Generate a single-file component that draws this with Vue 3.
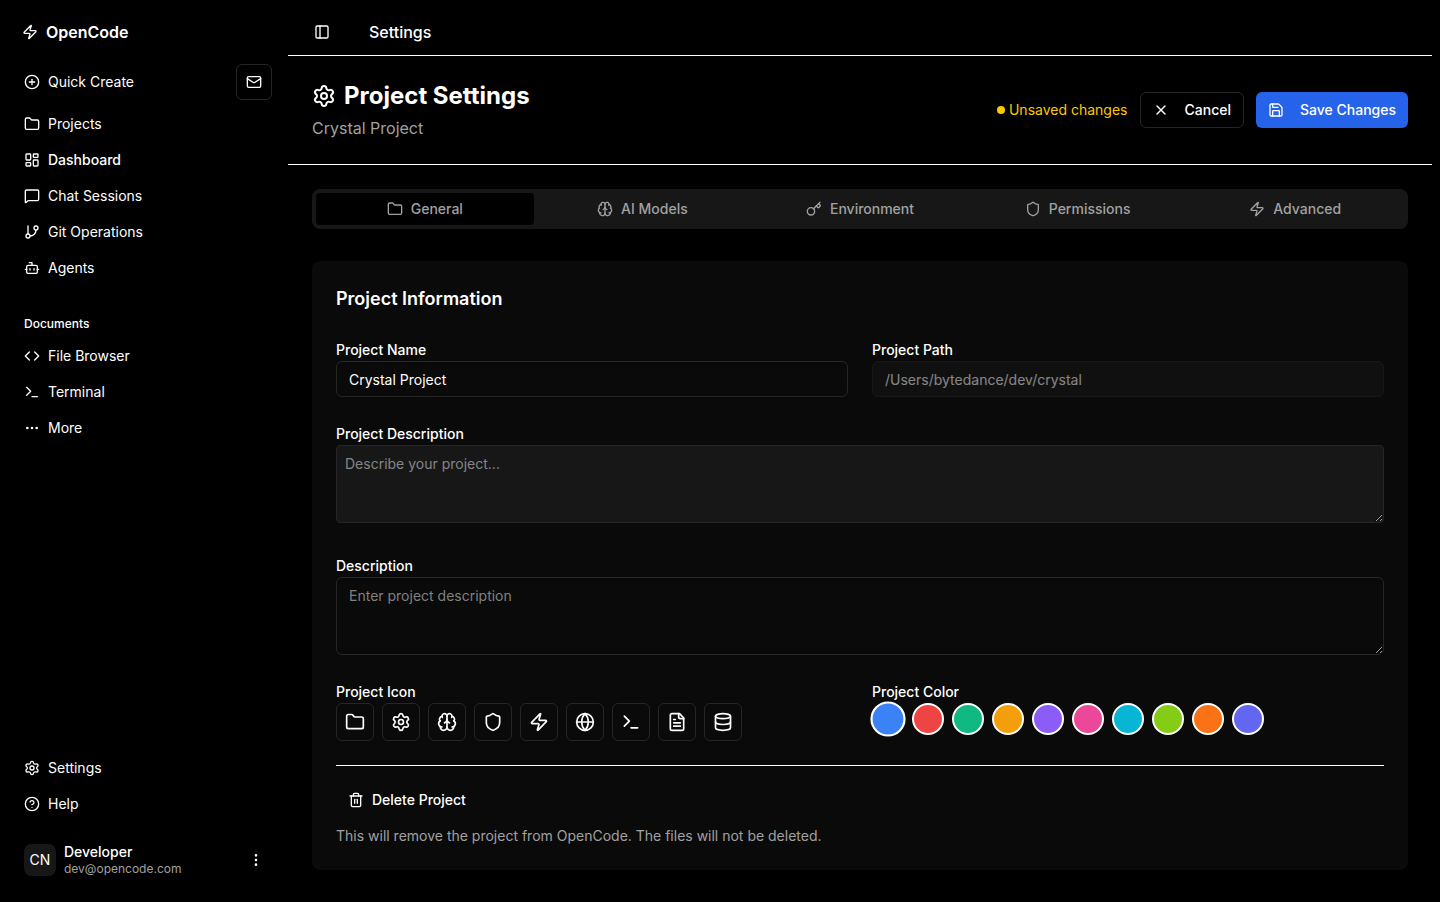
<script setup>
import { h, ref } from 'vue'

const icons = {
  zap: ['M4 14a1 1 0 0 1-.78-1.63l9.9-10.2a.5.5 0 0 1 .86.46l-1.92 6.02A1 1 0 0 0 13 10h7a1 1 0 0 1 .78 1.63l-9.9 10.2a.5.5 0 0 1-.86-.46l1.92-6.02A1 1 0 0 0 11 14z'],
  plus: ['M2 12a10 10 0 1 0 20 0a10 10 0 1 0-20 0', 'M8 12h8', 'M12 8v8'],
  mail: ['m22 7-8.991 5.727a2 2 0 0 1-2.009 0L2 7', 'M4 4h16a2 2 0 0 1 2 2v12a2 2 0 0 1-2 2H4a2 2 0 0 1-2-2V6a2 2 0 0 1 2-2z'],
  folder: ['M20 20a2 2 0 0 0 2-2V8a2 2 0 0 0-2-2h-7.9a2 2 0 0 1-1.69-.9L9.6 3.9A2 2 0 0 0 7.93 3H4a2 2 0 0 0-2 2v13a2 2 0 0 0 2 2Z'],
  dashboard: ['M4 3h5a1 1 0 0 1 1 1v7a1 1 0 0 1-1 1H4a1 1 0 0 1-1-1V4a1 1 0 0 1 1-1z', 'M15 3h5a1 1 0 0 1 1 1v3a1 1 0 0 1-1 1h-5a1 1 0 0 1-1-1V4a1 1 0 0 1 1-1z', 'M15 12h5a1 1 0 0 1 1 1v7a1 1 0 0 1-1 1h-5a1 1 0 0 1-1-1v-7a1 1 0 0 1 1-1z', 'M4 16h5a1 1 0 0 1 1 1v3a1 1 0 0 1-1 1H4a1 1 0 0 1-1-1v-3a1 1 0 0 1 1-1z'],
  message: ['M22 17a2 2 0 0 1-2 2H6.828a2 2 0 0 0-1.414.586l-2.202 2.202A.71.71 0 0 1 2 21.286V5a2 2 0 0 1 2-2h16a2 2 0 0 1 2 2z'],
  branch: ['M6 3v12', 'M15 6a3 3 0 1 0 6 0a3 3 0 1 0-6 0', 'M3 18a3 3 0 1 0 6 0a3 3 0 1 0-6 0', 'M18 9a9 9 0 0 1-9 9'],
  bot: ['M12 8V4H8', 'M6 8h12a2 2 0 0 1 2 2v8a2 2 0 0 1-2 2H6a2 2 0 0 1-2-2v-8a2 2 0 0 1 2-2z', 'M2 14h2', 'M20 14h2', 'M15 13v2', 'M9 13v2'],
  code: ['m16 18 6-6-6-6', 'm8 6-6 6 6 6'],
  terminal: ['M12 19h8', 'm4 17 6-6-6-6'],
  more: ['M11 12a1 1 0 1 0 2 0a1 1 0 1 0-2 0', 'M18 12a1 1 0 1 0 2 0a1 1 0 1 0-2 0', 'M4 12a1 1 0 1 0 2 0a1 1 0 1 0-2 0'],
  moreVertical: ['M11 12a1 1 0 1 0 2 0a1 1 0 1 0-2 0', 'M11 5a1 1 0 1 0 2 0a1 1 0 1 0-2 0', 'M11 19a1 1 0 1 0 2 0a1 1 0 1 0-2 0'],
  settings: ['M9.671 4.136a2.34 2.34 0 0 1 4.659 0 2.34 2.34 0 0 0 3.319 1.915 2.34 2.34 0 0 1 2.33 4.033 2.34 2.34 0 0 0 0 3.831 2.34 2.34 0 0 1-2.33 4.033 2.34 2.34 0 0 0-3.319 1.915 2.34 2.34 0 0 1-4.659 0 2.34 2.34 0 0 0-3.32-1.915 2.34 2.34 0 0 1-2.33-4.033 2.34 2.34 0 0 0 0-3.831A2.34 2.34 0 0 1 6.35 6.051a2.34 2.34 0 0 0 3.319-1.915', 'M9 12a3 3 0 1 0 6 0a3 3 0 1 0-6 0'],
  help: ['M2 12a10 10 0 1 0 20 0a10 10 0 1 0-20 0', 'M9.09 9a3 3 0 0 1 5.83 1c0 2-3 3-3 3', 'M12 17h.01'],
  panel: ['M5 3h14a2 2 0 0 1 2 2v14a2 2 0 0 1-2 2H5a2 2 0 0 1-2-2V5a2 2 0 0 1 2-2z', 'M9 3v18'],
  close: ['M18 6 6 18', 'm6 6 12 12'],
  save: ['M15.2 3a2 2 0 0 1 1.4.6l3.8 3.8a2 2 0 0 1 .6 1.4V19a2 2 0 0 1-2 2H5a2 2 0 0 1-2-2V5a2 2 0 0 1 2-2z', 'M17 21v-7a1 1 0 0 0-1-1H8a1 1 0 0 0-1 1v7', 'M7 3v4a1 1 0 0 0 1 1h7'],
  brain: ['M12 18V5', 'M15 13a4.17 4.17 0 0 1-3-4 4.17 4.17 0 0 1-3 4', 'M17.598 6.5A3 3 0 1 0 12 5a3 3 0 1 0-5.598 1.5', 'M17.997 5.125a4 4 0 0 1 2.526 5.77', 'M18 18a4 4 0 0 0 2-7.464', 'M19.967 17.483A4 4 0 1 1 12 18a4 4 0 1 1-7.967-.517', 'M6 18a4 4 0 0 1-2-7.464', 'M6.003 5.125a4 4 0 0 0-2.526 5.77'],
  key: ['m15.5 7.5 2.3 2.3a1 1 0 0 0 1.4 0l2.1-2.1a1 1 0 0 0 0-1.4L19 4', 'm21 2-9.6 9.6', 'M2 15.5a5.5 5.5 0 1 0 11 0a5.5 5.5 0 1 0-11 0'],
  shield: ['M20 13c0 5-3.5 7.5-7.66 8.95a1 1 0 0 1-.67-.01C7.5 20.5 4 18 4 13V6a1 1 0 0 1 1-1c2 0 4.5-1.2 6.24-2.72a1.17 1.17 0 0 1 1.52 0C14.51 3.81 17 5 19 5a1 1 0 0 1 1 1z'],
  globe: ['M2 12a10 10 0 1 0 20 0a10 10 0 1 0-20 0', 'M12 2a14.5 14.5 0 0 0 0 20 14.5 14.5 0 0 0 0-20', 'M2 12h20'],
  file: ['M15 2H6a2 2 0 0 0-2 2v16a2 2 0 0 0 2 2h12a2 2 0 0 0 2-2V7Z', 'M14 2v4a2 2 0 0 0 2 2h4', 'M10 9H8', 'M16 13H8', 'M16 17H8'],
  database: ['M3 5a9 3 0 1 0 18 0a9 3 0 1 0-18 0', 'M3 5V19A9 3 0 0 0 21 19V5', 'M3 12A9 3 0 0 0 21 12'],
  trash: ['M10 11v6', 'M14 11v6', 'M19 6v14a2 2 0 0 1-2 2H7a2 2 0 0 1-2-2V6', 'M3 6h18', 'M8 6V4a2 2 0 0 1 2-2h4a2 2 0 0 1 2 2v2'],
}

const Icon = (props) =>
  h(
    'svg',
    {
      width: props.size || 16,
      height: props.size || 16,
      viewBox: '0 0 24 24',
      fill: 'none',
      stroke: 'currentColor',
      'stroke-width': 2,
      'stroke-linecap': 'round',
      'stroke-linejoin': 'round',
      'aria-hidden': 'true',
    },
    icons[props.name].map((d) => h('path', { d })),
  )
Icon.props = ['name', 'size']

const mainNav = [
  { icon: 'folder', label: 'Projects' },
  { icon: 'dashboard', label: 'Dashboard', active: true },
  { icon: 'message', label: 'Chat Sessions' },
  { icon: 'branch', label: 'Git Operations' },
  { icon: 'bot', label: 'Agents' },
]
const docNav = [
  { icon: 'code', label: 'File Browser' },
  { icon: 'terminal', label: 'Terminal' },
  { icon: 'more', label: 'More' },
]
const footNav = [
  { icon: 'settings', label: 'Settings' },
  { icon: 'help', label: 'Help' },
]
const tabs = [
  { icon: 'folder', label: 'General' },
  { icon: 'brain', label: 'AI Models' },
  { icon: 'key', label: 'Environment' },
  { icon: 'shield', label: 'Permissions' },
  { icon: 'zap', label: 'Advanced' },
]
const projectIcons = ['folder', 'settings', 'brain', 'shield', 'zap', 'globe', 'terminal', 'file', 'database']
const colors = ['#3b82f6', '#ef4444', '#10b981', '#f59e0b', '#8b5cf6', '#ec4899', '#06b6d4', '#84cc16', '#f97316', '#6366f1']

const activeTab = ref('General')
const color = ref(colors[0])
const name = ref('Crystal Project')
const path = ref('/Users/bytedance/dev/crystal')
</script>

<template>
  <div class="app">
    <aside class="sidebar">
      <a class="brand" href="#"><Icon name="zap" /><span>OpenCode</span></a>

      <div class="quick">
        <button class="nav-item" type="button"><Icon name="plus" />Quick Create</button>
        <button class="square" type="button" aria-label="Inbox"><Icon name="mail" /></button>
      </div>

      <nav class="nav" aria-label="Main">
        <a v-for="item in mainNav" :key="item.label" class="nav-item" :class="{ active: item.active }" href="#">
          <Icon :name="item.icon" />{{ item.label }}
        </a>
      </nav>

      <h2 class="group">Documents</h2>
      <nav class="nav" aria-label="Documents">
        <a v-for="item in docNav" :key="item.label" class="nav-item" href="#">
          <Icon :name="item.icon" />{{ item.label }}
        </a>
      </nav>

      <nav class="nav nav-bottom" aria-label="Support">
        <a v-for="item in footNav" :key="item.label" class="nav-item" href="#">
          <Icon :name="item.icon" />{{ item.label }}
        </a>
      </nav>

      <button class="user" type="button">
        <span class="avatar">CN</span>
        <span class="who">
          <span class="who-name">Developer</span>
          <span class="who-mail">dev@opencode.com</span>
        </span>
        <Icon name="moreVertical" />
      </button>
    </aside>

    <main class="main">
      <header class="topbar">
        <button class="toggle" type="button" aria-label="Toggle sidebar"><Icon name="panel" /></button>
        <span class="crumb">Settings</span>
      </header>

      <section class="head">
        <div>
          <h1><Icon name="settings" size="24" />Project Settings</h1>
          <p class="subtitle">Crystal Project</p>
        </div>
        <div class="actions">
          <span class="unsaved"><i class="dot"></i>Unsaved changes</span>
          <button class="btn outline" type="button"><Icon name="close" />Cancel</button>
          <button class="btn primary" type="button"><Icon name="save" />Save Changes</button>
        </div>
      </section>

      <div class="body">
        <div class="tabs" role="tablist">
          <button
            v-for="tab in tabs"
            :key="tab.label"
            class="tab"
            :class="{ selected: tab.label === activeTab }"
            type="button"
            role="tab"
            :aria-selected="tab.label === activeTab"
            @click="activeTab = tab.label"
          >
            <Icon :name="tab.icon" />{{ tab.label }}
          </button>
        </div>

        <form class="card" @submit.prevent>
          <h3>Project Information</h3>
          <div class="cols">
            <div>
              <label for="name">Project Name</label>
              <input id="name" v-model="name" class="field" type="text" />
            </div>
            <div>
              <label for="path">Project Path</label>
              <input id="path" v-model="path" class="field" type="text" disabled />
            </div>
          </div>

          <div class="first-area">
            <label for="project-description">Project Description</label>
            <textarea id="project-description" class="area filled" rows="3" placeholder="Describe your project..."></textarea>
          </div>

          <div>
            <label for="description">Description</label>
            <textarea id="description" class="area" rows="3" placeholder="Enter project description"></textarea>
          </div>

          <div class="cols">
            <div role="group" aria-labelledby="icon-label">
              <div id="icon-label" class="label">Project Icon</div>
              <div class="choices">
                <button v-for="item in projectIcons" :key="item" class="choice" type="button" :aria-label="item">
                  <Icon :name="item" size="20" />
                </button>
              </div>
            </div>
            <div role="group" aria-labelledby="color-label">
              <div id="color-label" class="label">Project Color</div>
              <div class="choices">
                <button
                  v-for="item in colors"
                  :key="item"
                  class="swatch"
                  :class="{ picked: item === color }"
                  :style="{ backgroundColor: item }"
                  type="button"
                  :aria-label="item"
                  @click="color = item"
                ></button>
              </div>
            </div>
          </div>

          <div class="danger">
            <button class="btn delete" type="button"><Icon name="trash" />Delete Project</button>
            <p class="note">This will remove the project from OpenCode. The files will not be deleted.</p>
          </div>
        </form>
      </div>
    </main>
  </div>
</template>

<style>
html,
body {
  background: #000;
}
</style>

<style scoped>
.app,
.app * {
  box-sizing: border-box;
}
.app {
  display: grid;
  grid-template-columns: 288px minmax(0, 1fr);
  min-height: 100vh;
  background: #000;
  color: #fff;
  font-family: Inter, "Liberation Sans", sans-serif;
  font-size: 14px;
  line-height: 20px;
}
h1,
h2,
h3,
p {
  margin: 0;
}
button,
input,
textarea {
  margin: 0;
  font: inherit;
  color: inherit;
}
button {
  padding: 0;
  border: 0;
  background: none;
  cursor: pointer;
}
a {
  color: inherit;
  text-decoration: none;
}
svg {
  flex: none;
}

.sidebar {
  display: flex;
  flex-direction: column;
  padding: 16px 16px 18px;
}
.brand {
  display: flex;
  align-items: center;
  gap: 8px;
  height: 32px;
  padding: 0 6px;
  font-size: 16px;
  font-weight: 600;
}
.quick {
  display: flex;
  align-items: center;
  justify-content: space-between;
  gap: 8px;
  margin: 16px 0 8px;
}
.square {
  display: flex;
  align-items: center;
  justify-content: center;
  width: 36px;
  height: 36px;
  border: 1px solid #262626;
  border-radius: 6px;
}
.nav {
  display: flex;
  flex-direction: column;
  gap: 4px;
}
.nav-item {
  display: flex;
  align-items: center;
  gap: 8px;
  height: 32px;
  padding: 0 8px;
  border-radius: 6px;
}
.active {
  font-weight: 500;
}
.group {
  margin-top: 24px;
  padding: 0 8px;
  font-size: 12px;
  font-weight: 500;
  line-height: 32px;
}
.nav-bottom {
  margin-top: auto;
}
.user {
  display: flex;
  align-items: center;
  gap: 8px;
  height: 48px;
  margin-top: 16px;
  padding: 0 8px;
  text-align: left;
}
.avatar {
  display: flex;
  align-items: center;
  justify-content: center;
  width: 32px;
  height: 32px;
  border-radius: 8px;
  background: #171717;
}
.who {
  display: grid;
  flex: 1;
}
.who-name {
  font-weight: 500;
  line-height: 18px;
}
.who-mail {
  color: #a1a1a1;
  font-size: 12px;
  line-height: 16px;
}

.main {
  margin-right: 8px;
}
.topbar {
  display: flex;
  align-items: center;
  gap: 33px;
  height: 56px;
  padding: 8px 20px 0;
  border-bottom: 1px solid #fff;
}
.toggle {
  display: flex;
  align-items: center;
  justify-content: center;
  width: 28px;
  height: 28px;
}
.crumb {
  font-size: 16px;
  font-weight: 500;
  line-height: 24px;
}
.head {
  display: flex;
  align-items: center;
  justify-content: space-between;
  padding: 24px;
  border-bottom: 1px solid #fff;
}
h1 {
  display: flex;
  align-items: center;
  gap: 8px;
  font-size: 24px;
  font-weight: 700;
  line-height: 32px;
}
.subtitle {
  margin-top: 4px;
  color: #a1a1a1;
  font-size: 16px;
  line-height: 24px;
}
.actions {
  display: flex;
  align-items: center;
  gap: 12px;
}
.unsaved {
  display: flex;
  align-items: center;
  gap: 4px;
  color: #fcc800;
}
.dot {
  width: 8px;
  height: 8px;
  border-radius: 50%;
  background: #fcc800;
}
.btn {
  display: flex;
  align-items: center;
  gap: 16px;
  height: 36px;
  padding: 0 12px;
  border-radius: 6px;
  font-weight: 500;
}
.outline {
  border: 1px solid #262626;
}
.primary {
  background: #2563eb;
}

.body {
  padding: 24px;
}
.tabs {
  display: grid;
  grid-template-columns: repeat(5, 1fr);
  height: 40px;
  padding: 4px;
  border-radius: 8px;
  background: #171717;
}
.tab {
  display: flex;
  align-items: center;
  justify-content: center;
  gap: 8px;
  border-radius: 4px;
  color: #a1a1a1;
  font-weight: 500;
}
.selected {
  background: #000;
}

.card {
  display: grid;
  gap: 24px;
  margin-top: 32px;
  padding: 24px;
  border-radius: 8px;
  background: #0a0a0a;
}
h3 {
  font-size: 18px;
  font-weight: 600;
  line-height: 28px;
}
.cols {
  display: grid;
  grid-template-columns: 1fr 1fr;
  gap: 24px;
}
label,
.label {
  display: block;
  height: 24px;
  font-weight: 500;
  line-height: 26px;
}
.field,
.area {
  display: block;
  width: 100%;
  border: 1px solid #262626;
  border-radius: 6px;
  background: transparent;
  outline: none;
}
.field {
  height: 36px;
  padding: 0 12px;
}
.field:disabled {
  background: #171717;
  opacity: 0.5;
}
.area {
  padding: 8px 12px;
  resize: vertical;
}
.area::placeholder {
  color: #808080;
}
.filled {
  padding: 8px;
  border-radius: 4px;
  background: #171717;
}
.filled::placeholder {
  color: #858585;
}
.first-area {
  padding-bottom: 6px;
}
.choices {
  display: flex;
  gap: 8px;
}
.choice {
  display: flex;
  align-items: center;
  justify-content: center;
  width: 38px;
  height: 38px;
  border: 1px solid #262626;
  border-radius: 6px;
}
.swatch {
  width: 32px;
  height: 32px;
  border: 2px solid #fff;
  border-radius: 50%;
}
.picked {
  transform: scale(1.1);
}
.danger {
  padding-top: 16px;
  border-top: 1px solid #fff;
}
.delete {
  gap: 8px;
}
.note {
  margin-top: 8px;
  color: #a1a1a1;
}
</style>
